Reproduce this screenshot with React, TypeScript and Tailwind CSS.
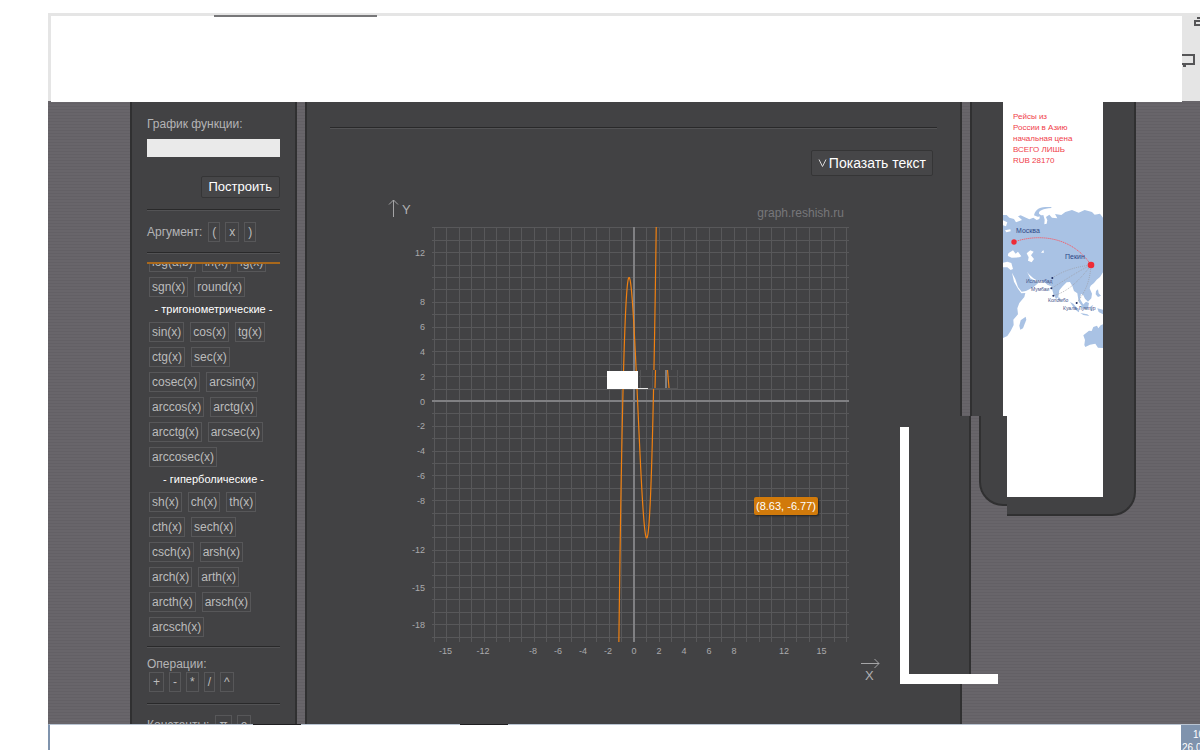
import { useState } from "react";
import clsx from "clsx";

const functionGroups = [
  {
    title: "",
    rows: [
      ["log(a,b)", "ln(x)", "lg(x)"],
      ["sgn(x)", "round(x)"],
    ],
  },
  {
    title: "- тригонометрические -",
    rows: [
      ["sin(x)", "cos(x)", "tg(x)"],
      ["ctg(x)", "sec(x)"],
      ["cosec(x)", "arcsin(x)"],
      ["arccos(x)", "arctg(x)"],
      ["arcctg(x)", "arcsec(x)"],
      ["arccosec(x)"],
    ],
  },
  {
    title: "- гиперболические -",
    rows: [
      ["sh(x)", "ch(x)", "th(x)"],
      ["cth(x)", "sech(x)"],
      ["csch(x)", "arsh(x)"],
      ["arch(x)", "arth(x)"],
      ["arcth(x)", "arsch(x)"],
      ["arcsch(x)"],
    ],
  },
];

const xLabels = [-15, -12, -8, -6, -4, -2, 0, 2, 4, 6, 8, 12, 15];
const yLabels = [12, 8, 6, 4, 2, 0, -2, -4, -6, -8, -12, -15, -18];

// plot geometry
const X0 = 256;
const Y0 = 211.5;
const STEP_X = 12.5;
const STEP_Y = 12.4;

const f = (x: number) => 15 * x ** 3 - 14 * x ** 2 - 18 * x + 6;

const range = (from: number, to: number) =>
  Array.from({ length: to - from + 1 }, (_, i) => from + i);

const curve = range(-130, 190)
  .map((i) => i / 100)
  .map((x, i) => `${i === 0 ? "M" : "L"}${(X0 + x * STEP_X).toFixed(2)} ${(Y0 - f(x) * STEP_Y).toFixed(2)}`)
  .join("");

function Divider({ className }: { className?: string }) {
  return <hr className={clsx("h-[2px] shrink-0 border-t border-b border-t-[#29292a] border-b-[#535355]", className)} />;
}

function Key({ label, small, onPress }: { label: string; small?: boolean; onPress: (s: string) => void }) {
  return (
    <button
      type="button"
      onClick={() => onPress(label)}
      className={clsx(
        "h-5 border border-[#575759] text-xs leading-[18px] text-[#bcbcbc] hover:border-[#888]",
        small ? "px-[3px]" : "px-[2px]"
      )}
    >
      {label}
    </button>
  );
}

function Plot() {
  return (
    <svg width="511" height="500" viewBox="0 0 511 500" className="block" fontFamily="Liberation Sans, sans-serif">
      <defs>
        <clipPath id="plot-area">
          <rect x="54" y="37" width="418" height="415" />
        </clipPath>
      </defs>

      {/* Grid */}
      <g stroke="#58585a" strokeWidth="1" shapeRendering="crispEdges">
        {range(-16, 17).map((n) => (
          <line key={n} x1={X0 + n * STEP_X} x2={X0 + n * STEP_X} y1="37" y2="452" />
        ))}
        {range(-19, 14).map((n) => (
          <line key={n} x1="54" x2="471" y1={Y0 - n * STEP_Y} y2={Y0 - n * STEP_Y} />
        ))}
      </g>
      <g stroke="#808083" strokeWidth="2" shapeRendering="crispEdges">
        <line x1={X0} x2={X0} y1="37" y2="452" />
        <line x1="54" x2="471" y1="211" y2="211" />
      </g>
      <path d={curve} clipPath="url(#plot-area)" fill="none" stroke="#f08010" strokeWidth="1.2" />

      {/* Shifted strip */}
      <g shapeRendering="crispEdges">
        <rect x="260" y="180" width="41" height="18" fill="#424244" />
        <path d="M262.5 180V198M274.5 180V198M287.5 180V198M299.5 180V198M261 186.500H300M261 198.500H300" stroke="#545456" />
        <path d="M288 180V198" stroke="#808083" strokeWidth="2" />
        <rect x="229" y="181" width="31" height="18" fill="#fff" />
        <rect x="260" y="198" width="10" height="1" fill="#e8e8e8" />
      </g>
      <path d="M277.500 180L277 198M289.500 180L291 198" stroke="#f08010" strokeWidth="1.200" fill="none" />

      {/* Axis names */}
      <g stroke="#a5a5a7" fill="none" strokeWidth="1">
        <path d="M15.500 27V10M11 14.500L15.500 10L20 14.500" />
        <path d="M483 473.500H501M496.500 469L501 473.500L496.500 478" />
      </g>
      <g fill="#b0b0b2" fontSize="13">
        <text x="24" y="24">Y</text>
        <text x="487" y="490">X</text>
      </g>
      <text x="466" y="27" textAnchor="end" fontSize="12" fill="#77777a">graph.reshish.ru</text>

      <g fill="#aaaaac" fontSize="9">
        {yLabels.map((n) => (
          <text key={n} x="47" y={Math.round(Y0 - n * STEP_Y) + 3} textAnchor="end">{n}</text>
        ))}
        {xLabels.map((n) => (
          <text key={n} x={X0 + n * STEP_X - (n < 0 ? 1 : 0)} y="464" textAnchor="middle">{n}</text>
        ))}
      </g>
    </svg>
  );
}

function RouteMap() {
  return (
    <svg width="100" height="150" viewBox="0 0 100 150" className="block" fontFamily="Liberation Sans, sans-serif">
      <g transform="scale(0.3333) translate(-39 -340)">
        <g fill="#a9c2e4">
          <path d="M39 376L50 376L58 384L72 388L78 398L96 391L84 380L92 377L108 384L118 389L130 384L140 391L148 388L150 378L160 376L164 390L163 404L170 402L172 392L168 382L178 375L186 384L202 386L195 373L214 376L226 367L246 361L266 369L284 361L306 367L314 375L330 372L339 384V548L330 562L320 570L312 580L302 588L299 596L306 612L304 626L294 636L285 627L280 617L273 612L270 628L279 643L286 658L280 655L266 636L262 611L252 604L247 589L240 577L230 578L218 590L208 602L205 622L198 628L190 612L184 590L172 585L160 574L140 572L130 566L116 553L111 546L121 566L133 572L144 581L130 593L108 604L95 606L84 592L76 568L66 549L72 576L84 597L94 611L106 610L103 622L88 640L82 656L84 674L70 690L71 706L62 724L52 739L39 745Z" />
          <path d="M132 377C137 354 155 351 184 352L184 355C160 357 145 363 147 372L157 380L143 381Z" />
          <path d="M107 681L109 690L99 716L91 720L88 708L92 692Z" />
          <path d="M280 737L297 723L305 724L310 712L321 708L325 716L332 707L339 704V775L324 774L316 762L300 765L286 772L283 766L285 751Z" />
          <path d="M240 637L250 642L268 663L266 668L254 658ZM271 670L292 674L298 679L280 676ZM276 648L288 636L297 640L294 656L282 658ZM302 650L310 646L304 656L308 664L301 662ZM318 604L324 599L326 611L333 618L324 622L317 614ZM322 656L339 660V674L326 667Z" />
          <path d="M205 622L211 626L209 634L204 630Z" />
        </g>
        <g fill="#fff">
          <path d="M54 499C52 488 64 487 69 482L77 492L84 486L94 500L88 503L65 504Z" />
          <path d="M110 491L121 482L131 486L123 497L132 508L125 518L114 513L116 503Z" />
          <path d="M39 519L52 516L64 520L69 538L62 541L52 533L39 533ZM153 489L160 481L162 489Z" />
          <path d="M39 392L52 398L48 410L39 407ZM45 422L61 419L62 425L49 428Z" />
        </g>
        <path d="M72 457C145 431 246 440 303 526" fill="none" stroke="#ef6470" strokeWidth="3" strokeDasharray="4 2" />
        <g fill="none" stroke="#9a9aa0" strokeWidth="2" strokeDasharray="3 3">
          <path d="M303 526C255 532 220 543 187 565M303 526C258 548 220 575 184 596M303 526C275 565 235 607 190 618M303 526C300 575 286 607 260 640" />
        </g>
        <g fill="#ee2b36">
          <circle cx="72" cy="457" r="8" />
          <circle cx="303" cy="526" r="10" />
        </g>
        <g fill="#1b2c62">
          <circle cx="187" cy="565" r="3" />
          <circle cx="184" cy="596" r="3" />
          <circle cx="190" cy="618" r="3" />
          <circle cx="260" cy="640" r="3" />
        </g>
      </g>
      <g fill="#2e4685" fontSize="7">
        <text x="13" y="30">Москва</text>
        <text x="62" y="56">Пекин</text>
      </g>
      <g fill="#3f5288" fontSize="5">
        <text x="23" y="80">Исламабад</text>
        <text x="28" y="88">Мумбаи</text>
        <text x="45" y="99">Коломбо</text>
        <text x="60" y="107">Куала-Лумпур</text>
      </g>
    </svg>
  );
}

function AdColumn() {
  return (
    <aside className="w-[166px] shrink-0">
      <div className="flex h-[315px] border-x-2 border-[#303031] bg-[#424244]">
        <a href="#asia" className="ml-[31px] block w-[100px] overflow-hidden bg-white">
          <p className="mt-2.5 ml-2.5 h-[92px] text-[8px] leading-[11px] text-[#f0404a]">
            Рейсы из
            <br />
            России в Азию
            <br />
            начальная цена
            <br />
            ВСЕГО ЛИШЬ
            <br />
            RUB 28170
          </p>
          <RouteMap />
        </a>
      </div>
      <div className="flex items-start pl-[9px]">
        <div className="h-[90px] w-7 rounded-bl-3xl border-b-2 border-l-2 border-[#303031] bg-[#424244]" />
        <div className="h-[100px] flex-1 rounded-br-3xl border-r-2 border-b-2 border-[#303031] bg-[#424244]">
          <div className="h-[81px] w-24 bg-white" />
        </div>
      </div>
    </aside>
  );
}

export default function App() {
  const [expr, setExpr] = useState("");
  const add = (s: string) => setExpr((prev) => prev + s);

  return (
    <div className="flex h-screen flex-col overflow-hidden bg-white pt-[13px] pl-12 font-['Liberation_Sans',Arial,sans-serif]">
      {/* Header */}
      <header className="relative z-10 flex h-[88px] shrink-0 bg-[#e5e5e5] pt-[3px] pl-[3px]">
        <div className="h-[86px] flex-1 bg-white" />
        <svg width="18" height="85" viewBox="0 0 18 85" fill="none" stroke="#555557" strokeWidth="2">
          <path d="M0 39H12V48H3V50H1M0 48H2" />
          <path d="M18 5H13V9H18M15 2H18" />
        </svg>
        <div className="absolute top-[2px] left-[166px] h-[2px] w-[163px] bg-[#777779]" />
      </header>

      {/* Body */}
      <main className="flex min-h-0 flex-1 overflow-hidden bg-[#656368] bg-[repeating-linear-gradient(180deg,#68656a_0px,#68656a_2px,#636065_2px,#636065_3px)] pr-16 pl-[82px]">
        <aside className="flex w-[167px] shrink-0 flex-col border-x-2 border-[#303031] bg-[#424244] px-[15px] pt-[13px] text-[#b4b4b6]">
          <label htmlFor="expr" className="text-xs leading-5">
            График функции:
          </label>
          <input
            id="expr"
            value={expr}
            onChange={(e) => setExpr(e.target.value)}
            className="mt-[5px] h-[18px] w-full shrink-0 bg-[#eaeaea] px-1 text-xs text-black outline-none"
          />
          <button
            type="button"
            className="mt-[19px] h-[22px] shrink-0 self-end rounded-xs border border-[#353536] bg-[#464648] px-[7px] text-[13px] leading-5 text-white"
          >
            Построить
          </button>
          <Divider className="mt-[11px]" />

          <div className="mt-[11px] flex items-center gap-[5px]">
            <span className="mr-px text-xs leading-5">Аргумент:</span>
            {["(", "x", ")"].map((k) => (
              <Key key={k} label={k} small onPress={add} />
            ))}
          </div>
          <Divider className="mt-[10px]" />

          {/* Functions, scrolled a little */}
          <div className="mt-2 flex shrink-0 flex-col overflow-hidden border-t-2 border-[#a8681c]">
            <div className="-mt-3 flex flex-col gap-[5px]">
              {functionGroups.map((group, g) => (
                <div key={g} className="flex flex-col gap-[5px]">
                  {group.title && (
                    <h3 className="text-center text-[11px] leading-[15px] whitespace-nowrap text-white">{group.title}</h3>
                  )}
                  {group.rows.map((row) => (
                    <div key={row[0]} className="flex gap-1.5 pl-[2px]">
                      {row.map((k) => (
                        <Key key={k} label={k} onPress={add} />
                      ))}
                    </div>
                  ))}
                </div>
              ))}
            </div>
          </div>
          <Divider className="mt-[9px]" />

          <div className="mt-[6px] text-xs leading-5">Операции:</div>
          <div className="-mt-[2px] flex gap-[5px] pl-[2px]">
            {["+", "-", "*", "/", "^"].map((k) => (
              <Key key={k} label={k} small onPress={add} />
            ))}
          </div>
          <Divider className="mt-[11px]" />

          <div className="mt-[10px] flex items-center gap-[5px]">
            <span className="mr-px text-xs leading-5">Константы:</span>
            {["π", "e"].map((k) => (
              <Key key={k} label={k} small onPress={add} />
            ))}
          </div>
        </aside>

        <section className="relative ml-2 flex flex-1 flex-col border-x-2 border-[#303031] bg-[#424244]">
          <Divider className="mx-[23px] mt-[26px]" />
          <button
            type="button"
            className="mt-[21px] mr-[27px] flex h-[26px] items-center gap-[2px] self-end rounded-xs border border-[#353536] bg-[#464648] px-[6px] text-sm text-white"
          >
            <svg width="9" height="8" viewBox="0 0 9 8" fill="none" stroke="#d5d5d5">
              <path d="M1 0.500L4.500 7.500L8 0.500" />
            </svg>
            Показать текст
          </button>
          <div className="relative mt-[14px] self-center">
            <Plot />
            <div className="absolute top-[307px] left-[376px] h-[18px] w-16 rounded-xs bg-[#d17a0b] text-center text-[11px] leading-[18px] whitespace-nowrap text-white shadow-[1px_1px_2px_#222]">
              (8.63, -6.77)
            </div>
          </div>

          {/* Right flap and the white corner over it */}
          <div className="absolute top-[315px] -right-[11px] h-[260px] w-[11px] border-r-2 border-[#303031] bg-[#424244]" />
          <div className="absolute top-[326px] -right-[38px] z-10 h-[257px] w-[98px] border-b-[10px] border-l-[9px] border-white" />
        </section>

        <div className="w-2 shrink-0" />
        <AdColumn />
      </main>

      {/* Taskbar */}
      <footer className="relative flex h-[26px] shrink-0 justify-between border-t border-l-2 border-t-[#b9c4d2] border-l-[#7f93ad] bg-white">
        <div className="absolute -top-px left-[203px] h-px w-12 bg-[#1f1f22]" />
        <div className="absolute -top-px left-[410px] h-px w-12 bg-[#1f1f22]" />
        <div className="ml-auto w-[19px] overflow-hidden bg-[#7f93ad] text-[10px] leading-[13px] whitespace-nowrap text-white">
          <div className="pt-[3px] pl-3">10</div>
          <div className="pl-px">26.0</div>
        </div>
      </footer>
    </div>
  );
}
